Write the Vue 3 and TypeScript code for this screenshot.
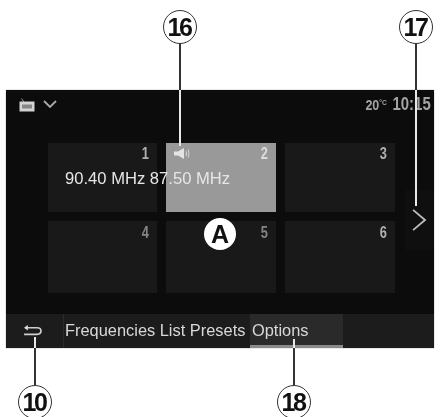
<script setup lang="ts">
interface Callout { id: string; cls: string }
const callouts: Callout[] = [
  { id: '16', cls: 'c16' },
  { id: '17', cls: 'c17' },
  { id: '10', cls: 'c10' },
  { id: '18', cls: 'c18' },
]
const tiles = [1, 2, 3, 4, 5, 6]
</script>

<template>
  <main class="page">
    <section class="screen">
      <header class="status">
        <div class="source">
          <svg class="radio" viewBox="0 0 17 15" width="17" height="15">
            <path d="M2.5 0.5 L5 4" stroke="#9a9a9a" stroke-width="1" />
            <rect x="0.5" y="3.5" width="15" height="10" fill="#d2d2d2" />
            <rect x="3" y="6.5" width="10" height="4" fill="#858585" />
          </svg>
          <svg class="chev" viewBox="0 0 14 8" width="14" height="8">
            <path d="M1 1 L7 7 L13 1" fill="none" stroke="#a8a8a8" stroke-width="1.8" />
          </svg>
        </div>
        <div class="clock"><span class="temp">20<sup>°C</sup></span><span class="time">10:15</span></div>
      </header>

      <div class="middle">
        <div class="grid">
          <div v-for="n in tiles" :key="n" class="tile" :class="[`t${n}`, { active: n === 2 }]">
            <svg v-if="n === 2" class="speaker" viewBox="0 0 18 13" width="18" height="13">
              <path d="M1 4.5 H5 L11 1 V12 L5 8.5 H1 Z" fill="#e4e4e4" />
              <path d="M13 4 Q14.3 6.5 13 9 M15 2.5 Q17 6.5 15 10.5" fill="none" stroke="#cfcfcf" stroke-width="1.1" />
            </svg>
            <span class="num">{{ n }}</span>
          </div>
          <div class="freq">90.40 MHz 87.50 MHz</div>
          <div class="badge">A</div>
        </div>
        <div class="next">
          <svg viewBox="0 0 18 26" width="17" height="24">
            <path d="M2 2 L15 13 L2 24" fill="none" stroke="#bdbdbd" stroke-width="2" />
          </svg>
        </div>
      </div>

      <footer class="bar">
        <div class="back">
          <svg viewBox="0 0 22 16" width="21" height="15">
            <path d="M4 4 H16 Q20 4 20 7.5 Q20 11 16 11 H2" fill="none" stroke="#d0d0d0" stroke-width="1.8" />
            <path d="M6 1 L2 4 L6 7 Z" fill="#e0e0e0" />
          </svg>
        </div>
        <div class="tabs">
          <span class="tab">Frequencies List Presets</span>
          <span class="tab options">Options</span>
        </div>
      </footer>
    </section>

    <div v-for="c in callouts" :key="c.id" class="callout" :class="c.cls">
      <span class="line"></span>
      <span class="circle">{{ c.id }}</span>
    </div>
  </main>
</template>

<style>
html, body { margin: 0; background: #fff; }
</style>

<style scoped>
.page {
  position: relative;
  width: 440px;
  height: 417px;
  padding: 90px 6px 0;
  box-sizing: border-box;
  background: #fff;
  font-family: "Liberation Sans", Arial, sans-serif;
  overflow: hidden;
  filter: blur(0.45px);
}
.screen {
  width: 428px;
  height: 258px;
  background: #0c0c0c;
  display: flex;
  flex-direction: column;
  box-shadow: 0 0 1px #777;
}
.status {
  height: 53px;
  flex: none;
  display: flex;
  justify-content: space-between;
  padding: 0 3px 0 13px;
  box-sizing: border-box;
}
.source { display: flex; gap: 7px; align-items: flex-start; padding-top: 8px; }
.chev { margin-top: 2px; }
.clock {
  color: #a3a3a3;
  line-height: 28px;
  white-space: nowrap;
  font-weight: 700;
  transform: scaleX(0.83);
  transform-origin: right center;
}
.temp { font-size: 15px; margin-right: 7px; }
.temp sup { font-size: 8px; vertical-align: 5px; line-height: 0; }
.time { font-size: 18px; }
.middle { flex: 1; display: flex; padding-left: 42px; }
.grid {
  position: relative;
  display: grid;
  grid-template-columns: 109px 110px 110px;
  grid-template-rows: 69px 72px;
  column-gap: 9px;
  row-gap: 9px;
  width: 347px;
  height: 150px;
}
.tile {
  position: relative;
  background: #191919;
  color: #b0b0b0;
}
.tile.active { background: #999; color: #dcdcdc; }
.t4, .t5 { color: #868686; }
.num {
  position: absolute;
  top: 3px;
  right: 8px;
  font-size: 16px;
  font-weight: 700;
  line-height: 16px;
  transform: scaleX(0.8);
  transform-origin: right center;
}
.t4 .num, .t5 .num, .t6 .num { top: 4px; }
.speaker { position: absolute; top: 4px; left: 7px; }
.freq {
  position: absolute;
  left: 17px;
  top: 27px;
  color: #e6e6e6;
  font-size: 16.6px;
  line-height: 18px;
  white-space: nowrap;
}
.badge {
  position: absolute;
  left: 156px;
  top: 75px;
  width: 32px;
  height: 32px;
  border-radius: 50%;
  background: #fff;
  color: #111;
  font-weight: 700;
  font-size: 25px;
  line-height: 32px;
  text-align: center;
}
.next {
  margin-left: 10px;
  width: 28px;
  height: 60px;
  margin-top: 47px;
  display: flex;
  align-items: center;
  justify-content: center;
  background: #0f0f0f;
}
.bar {
  height: 34px;
  flex: none;
  background: #1c1c1c;
  display: flex;
}
.back {
  width: 58px;
  display: flex;
  align-items: center;
  justify-content: center;
  box-sizing: border-box;
  padding-right: 4px;
  border-right: 1px solid #2c2c2c;
}
.tabs { display: flex; font-size: 16.4px; color: #d8d8d8; line-height: 32px; }
.tab { white-space: nowrap; padding-left: 1px; }
.options {
  position: absolute;
  left: 250px;
  width: 93px;
  box-sizing: border-box;
  padding: 0 0 0 2px;
  background: #2a2a2a;
  border-bottom: 3px solid #8a8a8a;
  height: 34px;
}
.callout { position: absolute; width: 35px; }
.circle {
  position: absolute;
  left: 0;
  top: 0;
  width: 32px;
  height: 32px;
  border: 1.5px solid #333;
  border-radius: 50%;
  background: #fff;
  color: #111;
  font-size: 25px;
  font-weight: 700;
  line-height: 33px;
  text-align: center;
  letter-spacing: -2.5px;
  text-indent: -2px;
}
.line { position: absolute; width: 2px; left: 16px; }
.c16 { left: 163px; top: 10px; }
.c16 .line { top: 33px; height: 103px; background: linear-gradient(#333 47px, #e8e8e8 47px); }
.c17 { left: 399px; top: 10px; }
.c17 .line { top: 33px; height: 163px; background: linear-gradient(#333 47px, #e8e8e8 47px); }
.c10 { left: 18px; top: 385px; }
.c10 .line { top: -48px; height: 48px; background: linear-gradient(#e8e8e8 11px, #333 11px); }
.c18 { left: 277px; top: 385px; }
.c18 .line { top: -46px; height: 46px; background: linear-gradient(#e8e8e8 9px, #333 9px); }
</style>
